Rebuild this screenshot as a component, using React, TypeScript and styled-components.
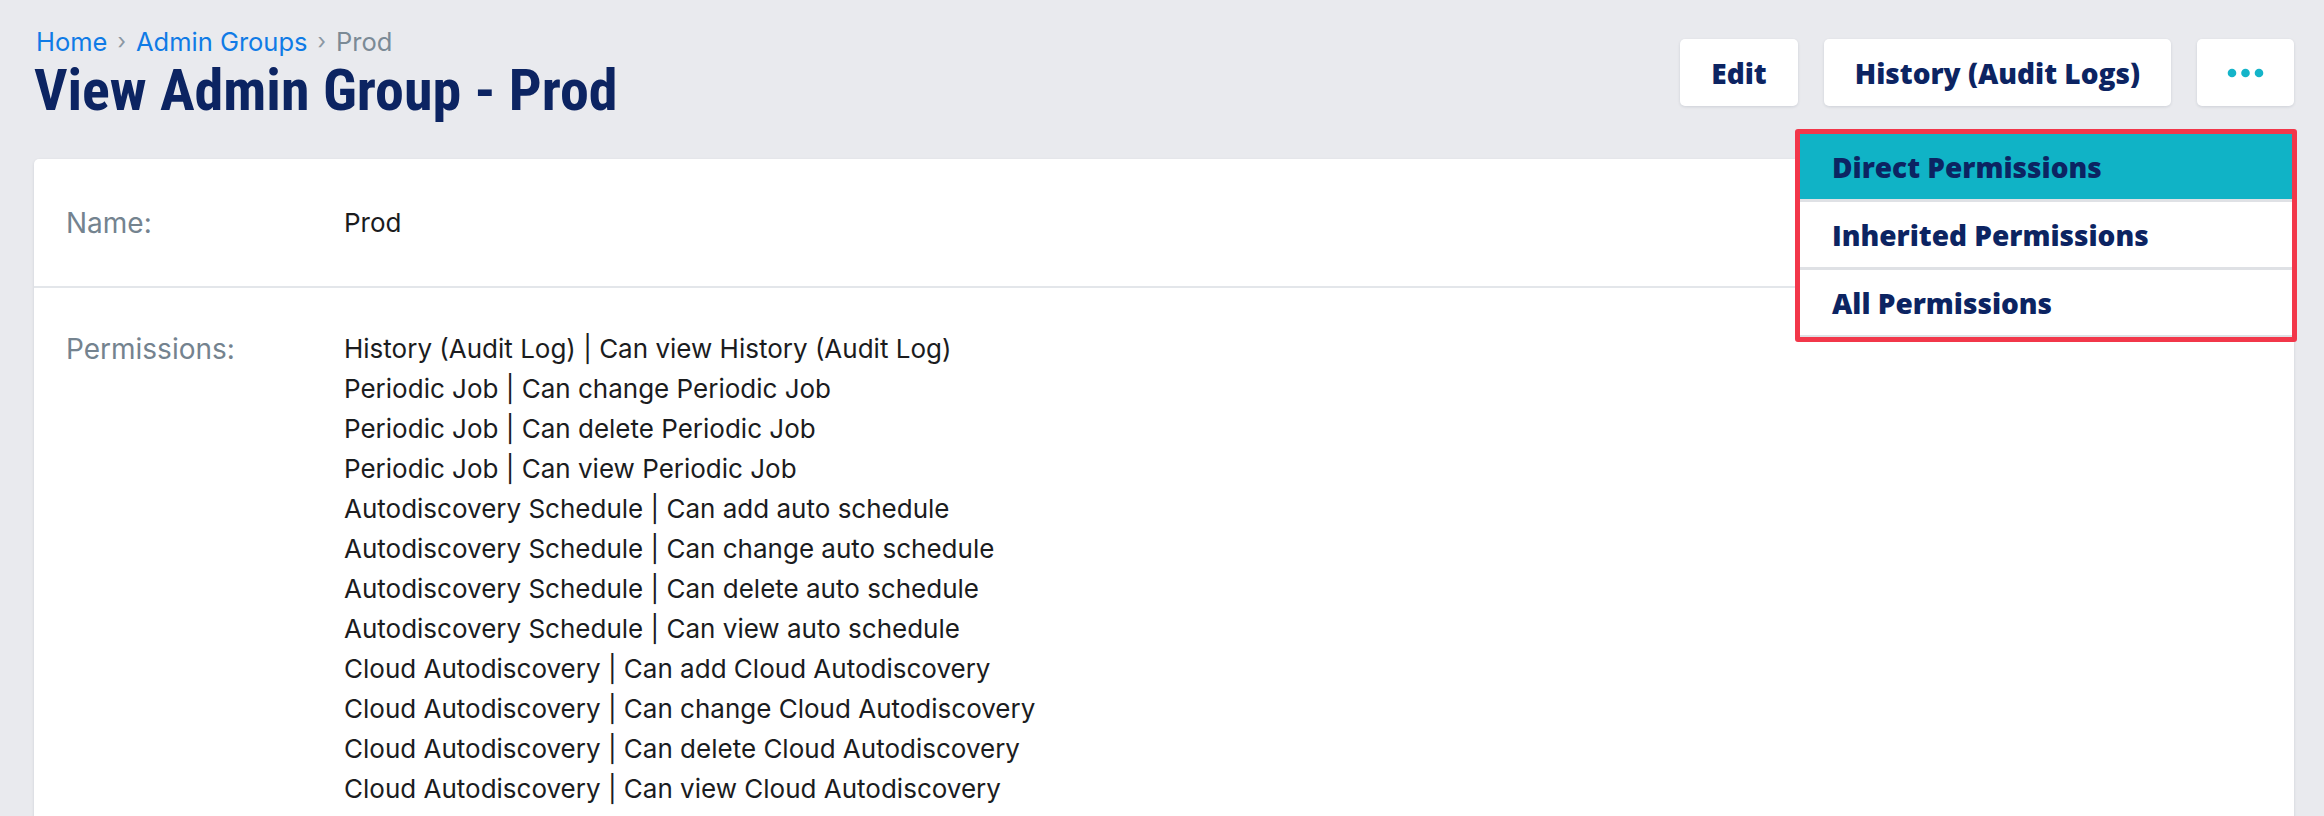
import React from 'react';
import styled, { createGlobalStyle } from 'styled-components';

const GlobalStyle = createGlobalStyle`
    html, body {
        margin: 0;
        padding: 0;
        background: #e9eaee;
        overflow: hidden;
    }
    body {
        font-family: Inter, Lato, sans-serif;
        color: #1b1c1e;
    }
`;

const Page = styled.div`
    padding: 0 30px 0 34px;
`;

const Header = styled.header`
    display: flex;
    justify-content: space-between;
    align-items: flex-start;
    padding-top: 24px;
`;

const TitleBlock = styled.div`
    display: flex;
    flex-direction: column;
`;

const Breadcrumb = styled.nav`
    display: flex;
    align-items: center;
    column-gap: 10px;
    height: 34px;
    padding-left: 2px;
    font-size: 25.5px;
    color: #7b8a96;
`;

const Crumb = styled.a`
    color: #0f7be6;
    text-decoration: none;
`;

const Sep = styled.span`
    color: #8b97a2;
    font-size: 22px;
`;

const Title = styled.h1`
    margin: 0;
    height: 64px;
    line-height: 64px;
    font-family: "Liberation Sans Narrow", "Roboto Condensed", Roboto, sans-serif;
    font-stretch: condensed;
    font-size: 58px;
    font-weight: 700;
    color: #0c2462;
`;

const Actions = styled.div`
    display: flex;
    column-gap: 26px;
    margin-top: 15px;
`;

const Button = styled.button`
    height: 67px;
    padding: 0 31px;
    border: none;
    border-radius: 5px;
    background: #fff;
    box-shadow: 0 1px 3px rgba(20, 30, 60, 0.12);
    font-family: "Open Sans", sans-serif;
    font-size: 28px;
    font-weight: 800;
    color: #0c2462;
    cursor: pointer;
`;

const MoreWrap = styled.div`
    position: relative;
`;

const MoreButton = styled(Button)`
    width: 97px;
    padding: 0;
    display: flex;
    align-items: center;
    justify-content: center;
`;

const Highlight = styled.div`
    position: absolute;
    top: calc(100% + 23px);
    right: -3px;
    width: 492px;
    border: 5px solid #f2374a;
    border-radius: 3px;
    z-index: 10;
`;

const Menu = styled.ul`
    list-style: none;
    margin: 0;
    padding: 0;
    background: #fff;
`;

const MenuItem = styled.li<{ $active?: boolean }>`
    height: 65px;
    display: flex;
    align-items: center;
    padding-left: 32px;
    border-bottom: 3px solid #dfe1e5;
    background: ${p => (p.$active ? '#10b3c6' : '#fff')};
    font-family: "Open Sans", sans-serif;
    font-size: 28px;
    font-weight: 800;
    color: #0c2462;

    &:last-child {
        border-bottom-width: 2px;
    }
`;

const Card = styled.section`
    margin-top: 37px;
    background: #fff;
    border-radius: 5px;
    box-shadow: 0 1px 3px rgba(20, 30, 60, 0.12);
`;

const Row = styled.div<{ $top?: boolean }>`
    display: grid;
    grid-template-columns: 278px 1fr;
    align-items: ${p => (p.$top ? 'start' : 'center')};
    padding: ${p => (p.$top ? '41px 32px 40px' : '0 32px')};
    min-height: ${p => (p.$top ? 'auto' : '127px')};
    border-bottom: 2px solid #e3e6ea;
    line-height: 40px;

    &:last-child {
        border-bottom: none;
    }
`;

const Label = styled.div`
    font-size: 28px;
    color: #74838f;
`;

const Value = styled.div`
    font-size: 26px;
    color: #1b1c1e;
`;

const PermList = styled.ul`
    list-style: none;
    margin: 0;
    padding: 0;
    font-size: 26px;
    color: #1b1c1e;
`;

const DotsIcon = () => (
    <svg width="37" height="10" viewBox="0 0 37 10">
        <circle cx="5" cy="5" r="4.3" fill="#14b4c9" />
        <circle cx="18.5" cy="5" r="4.3" fill="#14b4c9" />
        <circle cx="32" cy="5" r="4.3" fill="#14b4c9" />
    </svg>
);

const permissions = [
    'History (Audit Log) | Can view History (Audit Log)',
    'Periodic Job | Can change Periodic Job',
    'Periodic Job | Can delete Periodic Job',
    'Periodic Job | Can view Periodic Job',
    'Autodiscovery Schedule | Can add auto schedule',
    'Autodiscovery Schedule | Can change auto schedule',
    'Autodiscovery Schedule | Can delete auto schedule',
    'Autodiscovery Schedule | Can view auto schedule',
    'Cloud Autodiscovery | Can add Cloud Autodiscovery',
    'Cloud Autodiscovery | Can change Cloud Autodiscovery',
    'Cloud Autodiscovery | Can delete Cloud Autodiscovery',
    'Cloud Autodiscovery | Can view Cloud Autodiscovery',
];

const App: React.FC = () => {
    return (
        <>
            <GlobalStyle />
            <Page>
                <Header>
                    <TitleBlock>
                        <Breadcrumb>
                            <Crumb href="#">Home</Crumb>
                            <Sep>›</Sep>
                            <Crumb href="#">Admin Groups</Crumb>
                            <Sep>›</Sep>
                            <span>Prod</span>
                        </Breadcrumb>
                        <Title>View Admin Group - Prod</Title>
                    </TitleBlock>
                    <Actions>
                        <Button>Edit</Button>
                        <Button>History (Audit Logs)</Button>
                        <MoreWrap>
                            <MoreButton aria-label="More">
                                <DotsIcon />
                            </MoreButton>
                            <Highlight>
                                <Menu>
                                    <MenuItem $active>Direct Permissions</MenuItem>
                                    <MenuItem>Inherited Permissions</MenuItem>
                                    <MenuItem>All Permissions</MenuItem>
                                </Menu>
                            </Highlight>
                        </MoreWrap>
                    </Actions>
                </Header>
                <Card>
                    <Row>
                        <Label>Name:</Label>
                        <Value>Prod</Value>
                    </Row>
                    <Row $top>
                        <Label>Permissions:</Label>
                        <PermList>
                            {permissions.map(p => (
                                <li key={p}>{p}</li>
                            ))}
                        </PermList>
                    </Row>
                </Card>
            </Page>
        </>
    );
};

export default App;
